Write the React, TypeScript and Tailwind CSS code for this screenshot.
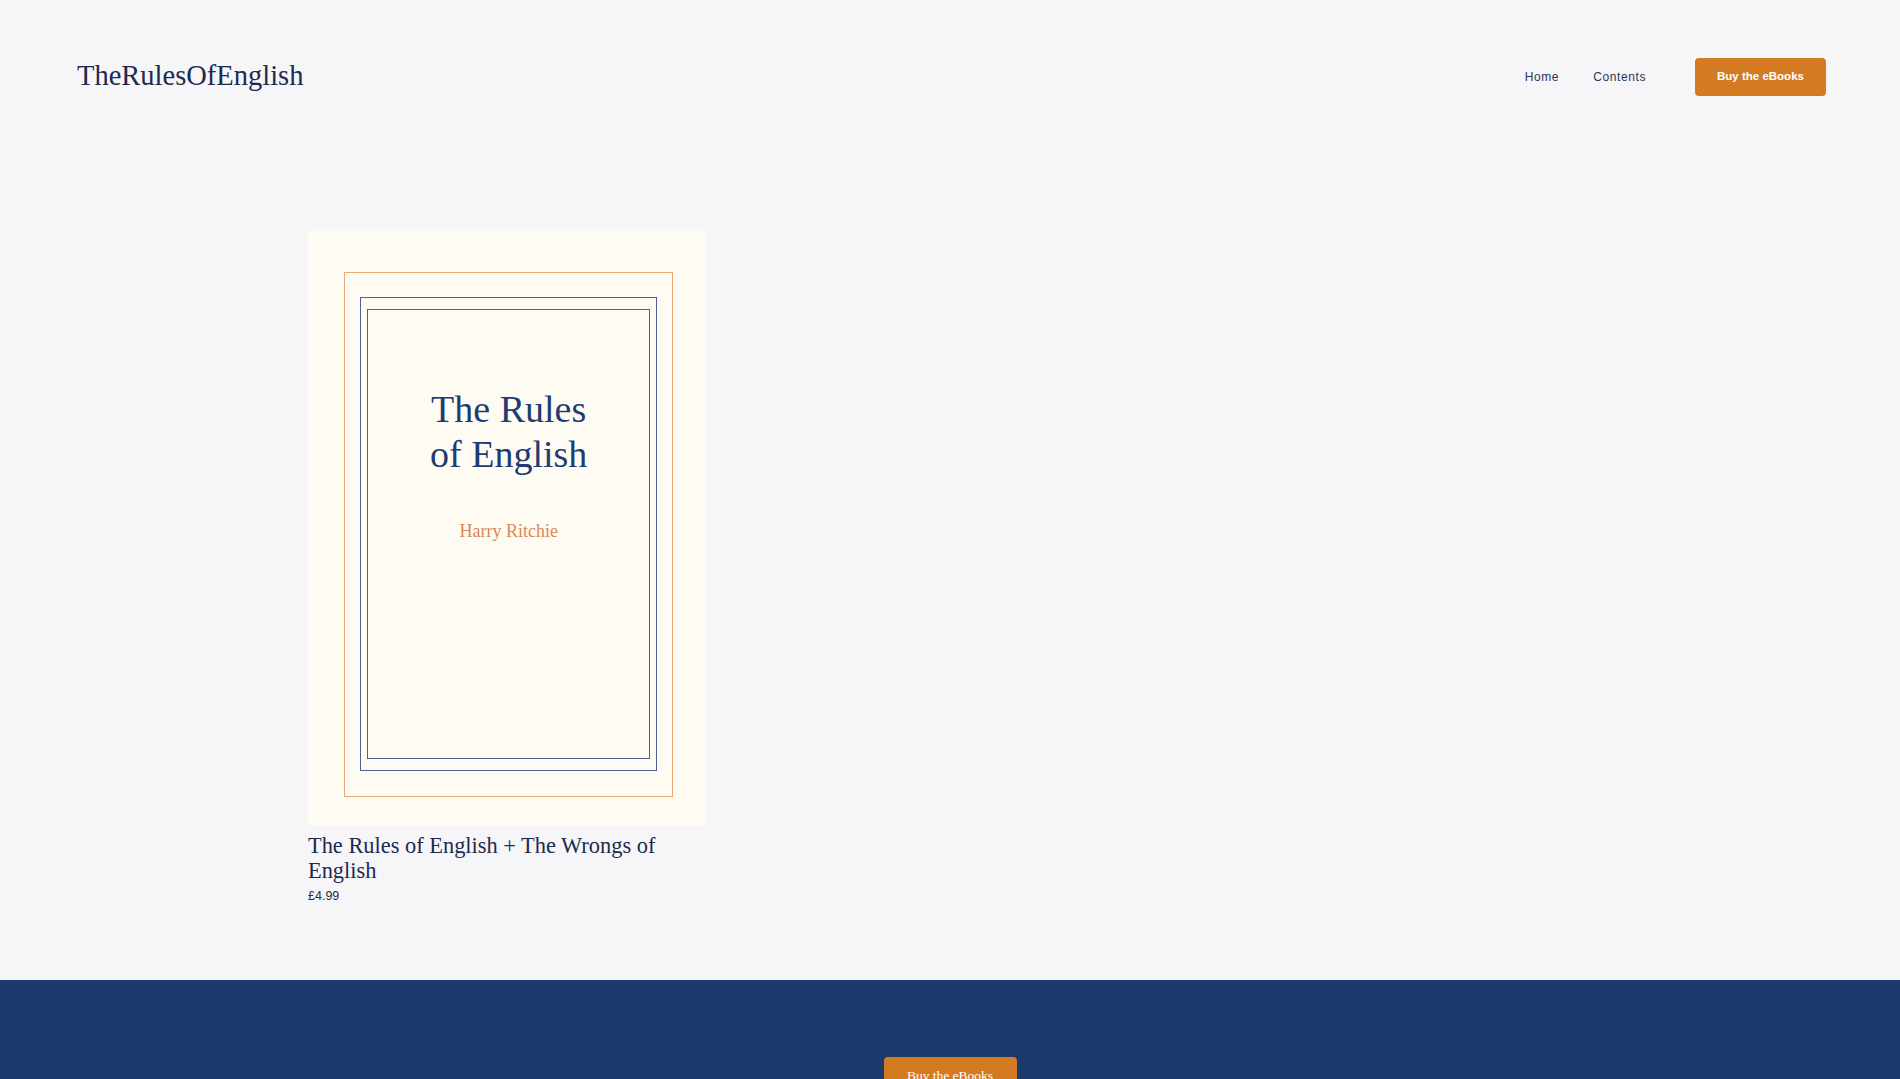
const serif = { fontFamily: '"Liberation Serif", "Times New Roman", serif' }

const products = [{ title: 'The Rules of English + The Wrongs of English', price: '£4.99' }]

function BookCover() {
  return (
    <div className="bg-[#fefbf2] pt-[41px] pb-[29px] pl-[36px] pr-[32px]">
      <div className="border border-[#eba875] px-[15px] pt-[24px] pb-[25px]">
        <div className="border border-[#4d6290] px-[6px] py-[11px]">
          <div className="border border-[#4d6290] h-[450px] flex flex-col items-center pt-[77px]" style={serif}>
            <h3 className="text-[38px] leading-[45px] text-[#1f3c72] text-center">
              The Rules
              <br />
              of English
            </h3>
            <p className="mt-[42px] text-[18px] leading-[24px] text-[#d98a57]">Harry Ritchie</p>
          </div>
        </div>
      </div>
    </div>
  )
}

export default function App() {
  return (
    <div className="min-h-screen bg-[#f6f6f8]" style={{ fontFamily: '"Liberation Sans", Arial, sans-serif' }}>
      <header className="h-[153px] flex items-center justify-between pl-[77px] pr-[74px]">
        <a href="#" className="text-[28.5px] text-[#1e2b50] leading-none" style={serif}>
          TheRulesOfEnglish
        </a>
        <nav className="flex items-center">
          <a href="#" className="text-[12px] tracking-[0.6px] text-[#2a3555]">Home</a>
          <a href="#" className="ml-[34px] text-[12px] tracking-[0.6px] text-[#2a3555]">Contents</a>
          <a
            href="#"
            className="ml-[49px] w-[131px] h-[38px] rounded-[4px] bg-[#d47b22] text-white text-[11.5px] font-bold flex items-center justify-center"
          >
            Buy the eBooks
          </a>
        </nav>
      </header>

      <main className="pt-[78px] pb-[76px]">
        <div className="max-w-[1284px] mx-auto grid grid-cols-3 gap-[46px]">
          {products.map((p) => (
            <div key={p.title}>
              <BookCover />
              <h2 className="mt-[7px] text-[22.4px] leading-[25px] text-[#1c2a4e]" style={serif}>
                {p.title}
              </h2>
              <p className="mt-[5px] text-[12.5px] leading-[16px] text-[#1c2a4e]">{p.price}</p>
            </div>
          ))}
        </div>
      </main>

      <footer className="bg-[#1d3a6e] pt-[77px] pb-[80px] flex justify-center">
        <a
          href="#"
          className="w-[133px] h-[44px] rounded-[4px] bg-[#d47b22] text-white text-[13.5px] leading-[20px] pt-[9px] text-center"
          style={serif}
        >
          Buy the eBooks
        </a>
      </footer>
    </div>
  )
}
